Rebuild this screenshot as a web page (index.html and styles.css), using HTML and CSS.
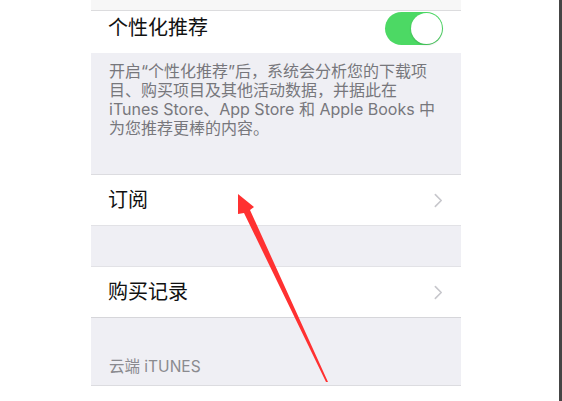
FILE: index.html
```html
<!DOCTYPE html>
<html lang="zh-CN">
<head>
<meta charset="utf-8">
<title>设置</title>
<link rel="stylesheet" href="styles.css">
</head>
<body>
<div class="page">
  <div class="gutter-left"></div>
  <div class="phone">
    <div class="top-strip"></div>
    <div class="cell cell-toggle">
      <span class="cell-label">个性化推荐</span>
      <span class="switch"><span class="knob"></span></span>
    </div>
    <div class="group-footer">
      开启“个性化推荐”后，系统会分析您的下载项<br>
      目、购买项目及其他活动数据，并据此在<br>
      iTunes Store、App Store 和 Apple Books 中<br>
      为您推荐更棒的内容。
    </div>
    <div class="cell cell-nav">
      <span class="cell-label">订阅</span>
      <svg class="chevron" viewBox="0 0 10 16" width="10" height="16"><path d="M1.5 1.5 L8 8 L1.5 14.5" fill="none" stroke="#c7c7cc" stroke-width="1.8" stroke-linecap="round" stroke-linejoin="round"/></svg>
    </div>
    <div class="spacer"></div>
    <div class="cell cell-nav cell-bordered">
      <span class="cell-label">购买记录</span>
      <svg class="chevron" viewBox="0 0 10 16" width="10" height="16"><path d="M1.5 1.5 L8 8 L1.5 14.5" fill="none" stroke="#c7c7cc" stroke-width="1.8" stroke-linecap="round" stroke-linejoin="round"/></svg>
    </div>
    <div class="group-header">云端 iTUNES</div>
    <div class="bottom"></div>
  </div>
  <div class="gutter-right"></div>
  <div class="edge"></div>
  <svg class="arrow" viewBox="0 0 562 401" width="562" height="401">
    <polygon points="238,194 254,207 250,210 328,382 326,382 244,213 238,214" fill="#ff3131"/>
  </svg>
</div>
</body>
</html>
```

FILE: styles.css
```css
* { box-sizing: border-box; }

html, body {
  margin: 0;
  padding: 0;
  background: #ffffff;
}

body {
  font-family: "Inter", "Noto Sans CJK SC", sans-serif;
}

.page {
  position: relative;
  display: flex;
  width: 562px;
  height: 401px;
  overflow: hidden;
}

.gutter-left {
  width: 91px;
  flex: none;
}

.phone {
  width: 370px;
  flex: none;
  display: flex;
  flex-direction: column;
  background: #efeff4;
}

.gutter-right {
  flex: 1;
  background: #ffffff;
}

.edge {
  width: 3px;
  flex: none;
  background: #454545;
}

.top-strip {
  height: 11px;
  flex: none;
  background: #f7f7f7;
  border-bottom: 1px solid #dcdcde;
}

.cell {
  display: flex;
  align-items: center;
  justify-content: space-between;
  background: #ffffff;
  padding: 0 18px 0 17px;
  flex: none;
}

.cell-label {
  font-size: 20px;
  color: #111111;
  line-height: 24px;
}

.cell-toggle {
  height: 42px;
  padding-bottom: 8px;
}

.switch {
  position: relative;
  width: 58px;
  height: 33px;
  border-radius: 17px;
  background: #4cd964;
  display: flex;
  justify-content: flex-end;
  align-items: center;
  padding: 1px;
  margin-top: 1px;
}

.knob {
  width: 31px;
  height: 31px;
  border-radius: 50%;
  background: #ffffff;
  box-shadow: 0 1px 2px rgba(0, 0, 0, 0.18);
}

.group-footer {
  height: 122px;
  flex: none;
  padding: 9px 17px 0 18px;
  font-size: 16px;
  line-height: 19px;
  color: #77777c;
  border-bottom: 1px solid #dcdce0;
}

.cell-nav {
  height: 50px;
}

.chevron {
  display: block;
  width: 9px;
  height: 15px;
}

.spacer {
  height: 42px;
  flex: none;
  border-top: 1px solid #e2e2e6;
  border-bottom: 1px solid #e2e2e6;
}

.cell-bordered {
  height: 51px;
  border-bottom: 1px solid #d6d6da;
}

.group-header {
  height: 68px;
  flex: none;
  display: flex;
  align-items: flex-end;
  padding: 0 17px 8px 18px;
  font-size: 15.5px;
  line-height: 20px;
  color: #8a8a8f;
  border-bottom: 1px solid #dcdce0;
}

.bottom {
  flex: 1;
  background: #ffffff;
}

.arrow {
  position: absolute;
  left: 0;
  top: 0;
  pointer-events: none;
}
```
